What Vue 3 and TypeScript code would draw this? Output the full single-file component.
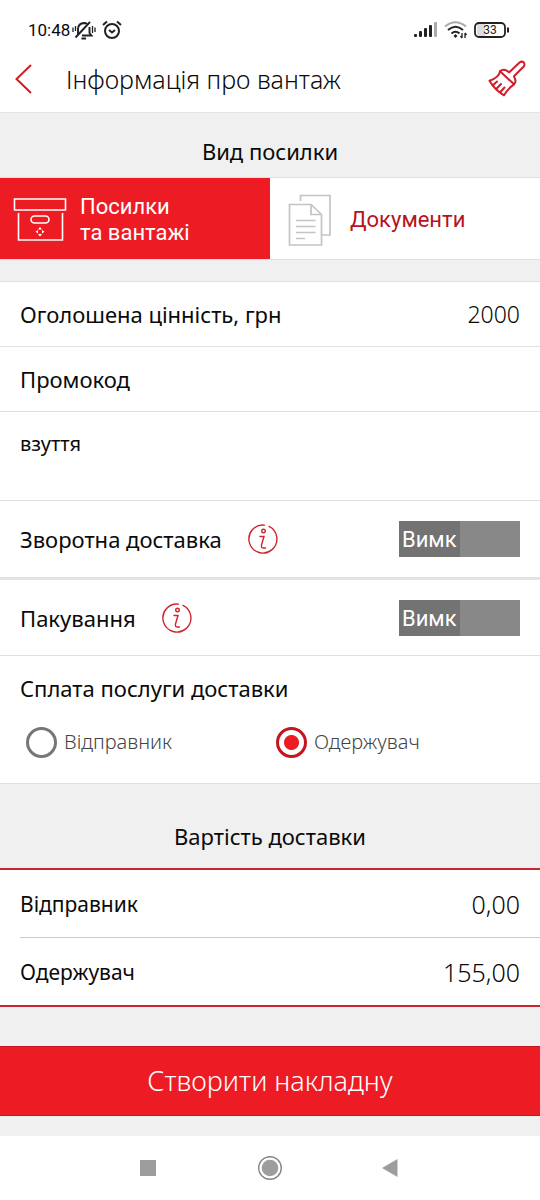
<script setup lang="ts">
import { ref } from 'vue'

type Parcel = 'cargo' | 'documents'
type Payer = 'sender' | 'recipient'

interface Service {
  id: string
  label: string
  on: boolean
}

const parcel = ref<Parcel>('cargo')
const payer = ref<Payer>('recipient')
const declared = ref('2000')
const promo = ref('')
const description = ref('взуття')
const services = ref<Service[]>([
  { id: 'return', label: 'Зворотна доставка', on: false },
  { id: 'packing', label: 'Пакування', on: false },
])
const payers: { id: Payer; label: string }[] = [
  { id: 'sender', label: 'Відправник' },
  { id: 'recipient', label: 'Одержувач' },
]
const costs = [
  { label: 'Відправник', value: '0,00' },
  { label: 'Одержувач', value: '155,00' },
]
</script>

<template>
  <div class="screen">
    <div class="status">
      <div class="status-group">
        <span class="clock">10:48</span>
        <svg class="bell" width="24" height="20" viewBox="0 0 24 20" fill="none" stroke="#222" stroke-width="1.900">
          <path d="M6 15V8.500Q6.500 3.500 12 3Q14 3 15 4M17.500 7V13L19.500 15.500H10M9.500 18.500H14" />
          <path d="M3.500 17.500L18 2" />
          <path d="M1 7.500V12M3.500 6V11M20.500 6V13M23 7.500V12" stroke-width="1.300" />
        </svg>
        <svg width="20" height="20" viewBox="0 0 20 20" fill="none" stroke="#222" stroke-width="2">
          <circle cx="10" cy="11" r="7" />
          <path d="M1 5L5 1.500M15 1.500L19 5M7 10L10 12.500L13 10" />
        </svg>
      </div>
      <div class="status-group">
        <svg width="24" height="16" viewBox="0 0 24 16" fill="#222">
          <rect x="0" y="12" width="3" height="3" rx="1" />
          <rect x="5" y="9" width="3" height="6" rx="1" />
          <rect x="10" y="6" width="3" height="9" rx="1" />
          <rect x="15" y="3" width="3" height="12" rx="1" />
          <rect x="20" y="0" width="3" height="15" rx="1" fill="#aaa" />
        </svg>
        <svg width="24" height="18" viewBox="0 0 24 18" fill="none" stroke="#222" stroke-width="2">
          <path d="M1 5.500Q11.500 -3 22 5.500" stroke="#aaa" />
          <path d="M4 9Q11.500 2.500 19 9M7.500 12.500Q11.500 9 15.500 12.500" />
          <path d="M9.500 15L11.500 13L13.500 15L11.500 17Z" fill="#222" stroke="none" />
          <path d="M18 12V17M21 12V17M16.500 15L18 17M21 12L22.500 14" stroke-width="1.300" />
        </svg>
        <svg class="battery" width="36" height="16" viewBox="0 0 36 16">
          <rect x="3" y="2" width="8" height="12" fill="#ddd" />
          <rect x="1" y="1" width="30" height="14" rx="4" fill="none" stroke="#222" stroke-width="1.800" />
          <path d="M34 5.500V10.500" stroke="#222" stroke-width="2" />
          <text x="16" y="12" text-anchor="middle">33</text>
        </svg>
      </div>
    </div>

    <header class="header">
      <button class="icon-button" type="button" aria-label="Назад">
        <svg width="17" height="30" viewBox="0 0 17 30" fill="none" stroke="#cf1d27" stroke-width="2">
          <path d="M16 1L1.500 15L16 29" />
        </svg>
      </button>
      <h1>Інформація про вантаж</h1>
      <button class="icon-button" type="button" aria-label="Очистити">
        <svg width="38" height="38" viewBox="0 0 38 38" fill="none" stroke="#d11d2a" stroke-width="2" stroke-linejoin="round" stroke-linecap="round">
          <path d="M12 11.300Q15 8.500 18.700 10.700L21.300 12.300L31.500 2.500Q34 .800 35.800 2.500Q37.300 4.500 35.500 6.800L26 16.300L27.300 19.700Q28 22.500 26 24.300Z" />
          <path d="M12 11.300Q11 17.500 1.500 20.700Q6.500 29.500 16 35.300Q20.500 28 26 24.300" />
          <path d="M5.300 25L9 21.500M8.700 28.500L13 24M12.300 32L16.500 27.500" />
        </svg>
      </button>
    </header>

    <main>
      <h2 class="section-title type-title">Вид посилки</h2>
      <div class="tabs">
        <button type="button" class="tab" :class="{ active: parcel === 'cargo' }" :aria-pressed="parcel === 'cargo'" @click="parcel = 'cargo'">
          <svg width="54" height="46" viewBox="0 0 54 46" fill="none" stroke="currentColor" stroke-width="1.600">
            <path d="M1.500 2H52.500V13H1.500ZM5.500 16V43H49.500V16" />
            <rect x="18" y="19" width="18" height="7" rx="3.500" />
            <g fill="currentColor" stroke="none">
              <path d="M27 30L29 32.500H25ZM27 39.500L25 37H29ZM22.500 34.800L25 33V36.500ZM31.500 34.800L29 33V36.500Z" />
            </g>
          </svg>
          <span>Посилки<br>та вантажі</span>
        </button>
        <button type="button" class="tab" :class="{ active: parcel === 'documents' }" :aria-pressed="parcel === 'documents'" @click="parcel = 'documents'">
          <svg class="docs" width="44" height="54" viewBox="0 0 44 54" fill="none" stroke="#c4c4c4" stroke-width="1.700">
            <path d="M12.500 8V2.500H42V42H34" />
            <path d="M1.500 11.500H23L33.500 21.500V52H1.500ZM23 11.500V21.500H33.500M8 27.500H27.500M8 33.500H27.500M8 39.500H27.500M8 45.500H17" />
          </svg>
          <span>Документи</span>
        </button>
      </div>

      <div class="form">
        <div class="row field">
          <label for="declared">Оголошена цінність, грн</label>
          <input id="declared" v-model="declared" class="declared" inputmode="numeric">
        </div>
        <div class="row field">
          <label for="promo">Промокод</label>
          <input id="promo" v-model="promo">
        </div>
        <textarea v-model="description" class="description" aria-label="Опис вантажу"></textarea>
        <div v-for="service in services" :key="service.id" class="row service">
          <span>{{ service.label }}</span>
          <button class="icon-button" type="button" :aria-label="service.label + ': довідка'">
            <svg width="30" height="30" viewBox="0 0 30 30" fill="none" stroke="#cf2530" stroke-width="1.400" stroke-linecap="round">
              <path d="M16.500 1.100A14 14 0 1 0 21 2.400" />
              <circle cx="15.500" cy="7" r="1.800" />
              <path d="M12 12.500H16L13.500 21Q13 24 15 24H17.500" />
            </svg>
          </button>
          <button class="switch" :class="{ on: service.on }" type="button" role="switch" :aria-checked="service.on" :aria-label="service.label" @click="service.on = !service.on">
            <span>{{ service.on ? 'Увім' : 'Вимк' }}</span>
          </button>
        </div>
        <fieldset class="payment">
          <legend>Сплата послуги доставки</legend>
          <div class="options">
            <label v-for="option in payers" :key="option.id">
              <input v-model="payer" type="radio" name="payer" :value="option.id">
              <span>{{ option.label }}</span>
            </label>
          </div>
        </fieldset>
      </div>

      <h2 class="section-title cost-title">Вартість доставки</h2>
      <dl class="costs">
        <div v-for="cost in costs" :key="cost.label" class="cost">
          <dt>{{ cost.label }}</dt>
          <dd>{{ cost.value }}</dd>
        </div>
      </dl>
      <button class="submit" type="button">Створити накладну</button>
    </main>

    <nav class="system-nav" aria-label="Системна навігація">
      <button class="icon-button" type="button" aria-label="Останні">
        <svg width="24" height="26" viewBox="0 0 24 26"><rect x="3" y="5" width="16" height="16" fill="#9d9d9d" /></svg>
      </button>
      <button class="icon-button" type="button" aria-label="Головна">
        <svg width="24" height="26" viewBox="0 0 24 26"><circle cx="12" cy="13" r="11.300" fill="none" stroke="#858585" stroke-width="1.400" /><circle cx="12" cy="13" r="8.300" fill="#9d9d9d" /></svg>
      </button>
      <button class="icon-button" type="button" aria-label="Назад у системі">
        <svg width="24" height="26" viewBox="0 0 24 26"><path d="M3 13L18.500 4V22Z" fill="#9d9d9d" /></svg>
      </button>
    </nav>
  </div>
</template>

<style>
body {
  margin: 0;
  background: #fff;
}
</style>

<style scoped>
* {
  box-sizing: border-box;
}

.screen {
  display: flex;
  flex-direction: column;
  min-height: 100vh;
  background: #f0f0f0;
  color: #0a0a0a;
  font-family: "Noto Sans", "Open Sans", sans-serif;
  font-size: 22px;
  line-height: 28px;
}

button,
input,
textarea {
  margin: 0;
  padding: 0;
  border: 0;
  background: none;
  color: inherit;
  font: inherit;
}

button {
  cursor: pointer;
}

svg {
  display: block;
  flex: none;
}

.icon-button {
  display: flex;
  flex: none;
}

.status {
  display: flex;
  justify-content: space-between;
  align-items: center;
  height: 60px;
  padding: 0 30px 0 28px;
  background: #fff;
  font-family: Roboto, sans-serif;
}

.status-group {
  display: flex;
  align-items: center;
  gap: 6px;
}

.clock {
  font-size: 17px;
}

.bell {
  margin-left: -4px;
}

.battery text {
  font: 12px Roboto, sans-serif;
  fill: #222;
}

.header {
  display: flex;
  align-items: center;
  height: 53px;
  padding: 0 14px 14px 15px;
  border-bottom: 1px solid #e4e4e4;
  background: #fff;
}

h1 {
  flex: 1;
  margin: 0 0 0 34px;
  font-size: 25px;
  font-weight: 300;
  line-height: 32px;
}

.section-title {
  margin: 0;
  font-size: 22px;
  font-weight: 400;
  text-align: center;
}

.type-title {
  padding: 24px 20px 12px;
}

.tabs {
  display: grid;
  grid-template-columns: 1fr 1fr;
  height: 83px;
  border: solid #e0e0e0;
  border-width: 1px 0;
  background: #fff;
}

.tab {
  display: flex;
  align-items: center;
  gap: 13px;
  padding: 2px 13px 0;
  color: #b5141d;
  font: 22px/26px Roboto, sans-serif;
  text-align: left;
}

.tab.active {
  background: #ed1c24;
  color: #fff;
}

.docs {
  margin: 0 5px;
}

.form {
  margin-top: 21px;
  border: solid #e0e0e0;
  border-width: 1px 0;
  background: #fff;
}

.row {
  display: flex;
  align-items: center;
  padding: 0 20px;
  border-bottom: 1px solid #e0e0e0;
}

.field {
  height: 65px;
}

.field input {
  flex: 1;
  min-width: 0;
  text-align: right;
}

.field .declared {
  font-size: 23px;
  font-weight: 300;
}

.description {
  display: block;
  width: 100%;
  height: 89px;
  padding: 18px 20px;
  border-bottom: 1px solid #e0e0e0;
  font-size: 20px;
  resize: none;
}

.service {
  height: 77px;
  gap: 26px;
}

.service + .service {
  height: 78px;
  border-top: 2px solid #e4e4e4;
}

.switch {
  display: flex;
  width: 121px;
  height: 36px;
  margin-left: auto;
  background: #888;
  color: #fff;
  font: 22px/38px Roboto, sans-serif;
}

.switch span {
  width: 50%;
  height: 100%;
  background: #737373;
}

.switch.on {
  justify-content: flex-end;
}

.payment {
  margin: 0;
  padding: 18px 20px 25px;
  border: 0;
}

.payment legend {
  float: left;
  padding: 0;
}

.options {
  display: grid;
  grid-template-columns: 1fr 1fr;
  gap: 6px;
  clear: both;
  padding: 24px 0 0 6px;
}

.options label {
  display: flex;
  align-items: center;
  gap: 7px;
  height: 32px;
  color: #444;
  font-size: 20px;
  font-weight: 300;
}

.options input {
  flex: none;
  width: 31px;
  height: 31px;
  border: 3px solid #777;
  border-radius: 50%;
  appearance: none;
}

.options input:checked {
  border-color: #c4161f;
  background: radial-gradient(circle, #ed1c24 7px, #fff 8px);
}

.cost-title {
  padding: 38px 20px 18px;
}

.costs {
  margin: 0;
  border: solid #c92630;
  border-width: 2px 0;
  background: #fff;
}

.cost {
  display: flex;
  justify-content: space-between;
  align-items: center;
  height: 67px;
  margin-left: 20px;
  padding-right: 20px;
}

.cost + .cost {
  height: 68px;
  border-top: 1px solid #ccc;
}

dt {
  font-size: 21px;
}

dd {
  margin: 0;
  font-size: 25px;
  font-weight: 300;
}

.submit {
  display: block;
  width: 100%;
  height: 70px;
  margin: 39px 0 20px;
  border: solid #c4161f;
  border-width: 1px 0;
  background: #ed1c24;
  color: #fff;
  font-size: 27px;
  font-weight: 300;
}

.system-nav {
  display: flex;
  flex: 1;
  justify-content: center;
  align-items: center;
  gap: 97px;
  min-height: 64px;
  background: #fff;
}
</style>
